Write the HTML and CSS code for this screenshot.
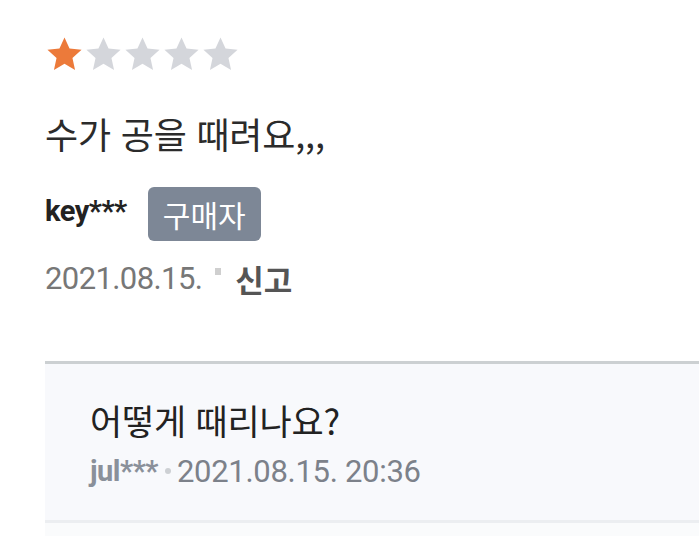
FILE: index.html
```html
<!DOCTYPE html>
<html lang="ko">

<head>
    <meta charset="UTF-8">
    <title>리뷰</title>
    <link rel="stylesheet" href="styles.css">
</head>

<body>

    <section class="review">
        <div class="stars">
            <svg class="star on" viewBox="0 0 24 24"><polygon points="12,1.5 15.1,8.3 22.5,9.1 16.9,14.1 18.5,21.5 12,17.7 5.5,21.5 7.1,14.1 1.5,9.1 8.9,8.3"/></svg>
            <svg class="star" viewBox="0 0 24 24"><polygon points="12,1.5 15.1,8.3 22.5,9.1 16.9,14.1 18.5,21.5 12,17.7 5.5,21.5 7.1,14.1 1.5,9.1 8.9,8.3"/></svg>
            <svg class="star" viewBox="0 0 24 24"><polygon points="12,1.5 15.1,8.3 22.5,9.1 16.9,14.1 18.5,21.5 12,17.7 5.5,21.5 7.1,14.1 1.5,9.1 8.9,8.3"/></svg>
            <svg class="star" viewBox="0 0 24 24"><polygon points="12,1.5 15.1,8.3 22.5,9.1 16.9,14.1 18.5,21.5 12,17.7 5.5,21.5 7.1,14.1 1.5,9.1 8.9,8.3"/></svg>
            <svg class="star" viewBox="0 0 24 24"><polygon points="12,1.5 15.1,8.3 22.5,9.1 16.9,14.1 18.5,21.5 12,17.7 5.5,21.5 7.1,14.1 1.5,9.1 8.9,8.3"/></svg>
        </div>

        <p class="review-text">수가 공을 때려요,,,</p>

        <div class="writer">
            <span class="writer-name">key***</span>
            <span class="badge">구매자</span>
        </div>

        <div class="review-meta">
            <span class="date">2021.08.15.</span>
            <span class="square"></span>
            <span class="report">신고</span>
        </div>
    </section>

    <section class="reply">
        <p class="reply-text">어떻게 때리나요?</p>
        <div class="reply-meta">
            <span class="reply-name">jul***</span>
            <span class="dot"></span>
            <span class="reply-date">2021.08.15. 20:36</span>
        </div>
    </section>

    <div class="next"></div>

</body>

</html>
```

FILE: styles.css
```css
body {
    background-color: white;
    margin: 0;
    font-family: Roboto, "Noto Sans CJK KR", sans-serif;
    color: #333;
}

p {
    margin: 0;
}

.review {
    padding: 35px 0 0 45px;
    height: 361px;
    box-sizing: border-box;
}

.stars {
    display: flex;
    height: 39px;
}

.star {
    width: 39px;
    height: 39px;
    fill: #d4d6db;
}

.star.on {
    fill: #ec7a3a;
}

.review-text {
    margin-top: 37px;
    font-family: "Noto Sans CJK KR", sans-serif;
    font-size: 36px;
    line-height: 44px;
    color: #2b2b2b;
    letter-spacing: -0.2px;
}

.writer {
    display: flex;
    align-items: center;
    margin-top: 32px;
    height: 54px;
}

.writer-name {
    font-weight: bold;
    font-size: 29px;
    color: #222;
    letter-spacing: -0.5px;
    margin-bottom: 6px;
}

.badge {
    margin-left: 21px;
    background-color: #7d8796;
    color: white;
    font-family: "Noto Sans CJK KR", sans-serif;
    font-size: 30px;
    line-height: 54px;
    padding: 0 15px;
    border-radius: 6px;
}

.review-meta {
    display: flex;
    align-items: center;
    margin-top: 15px;
    height: 44px;
}

.date {
    font-size: 31px;
    color: #777;
    letter-spacing: -0.6px;
}

.square {
    width: 6px;
    height: 7px;
    background-color: #cfcfcf;
    margin: 0 14px 0 13px;
    position: relative;
    top: -7px;
}

.report {
    font-family: "Noto Sans CJK KR", sans-serif;
    font-weight: bold;
    font-size: 31px;
    color: #555;
}

.reply {
    margin-left: 45px;
    border-top: 3px solid #ccd0d2;
    background-color: #f8f9fc;
    padding: 34px 0 0 45px;
    height: 162px;
    box-sizing: border-box;
    border-bottom: 3px solid #eceef1;
}

.reply-text {
    font-family: "Noto Sans CJK KR", sans-serif;
    font-size: 35px;
    line-height: 44px;
    color: #222;
    letter-spacing: -0.2px;
}

.reply-meta {
    display: flex;
    align-items: center;
    margin-top: 9px;
    height: 40px;
}

.reply-name {
    font-weight: bold;
    font-size: 29px;
    color: #8a909a;
    letter-spacing: -0.5px;
}

.dot {
    width: 6px;
    height: 6px;
    border-radius: 50%;
    background-color: #cdd0d4;
    margin: 0 6px 0 7px;
}

.reply-date {
    font-size: 31px;
    color: #7c818a;
    letter-spacing: -0.3px;
}

.next {
    margin-left: 45px;
    height: 20px;
    background-color: #fafbfc;
}
```
